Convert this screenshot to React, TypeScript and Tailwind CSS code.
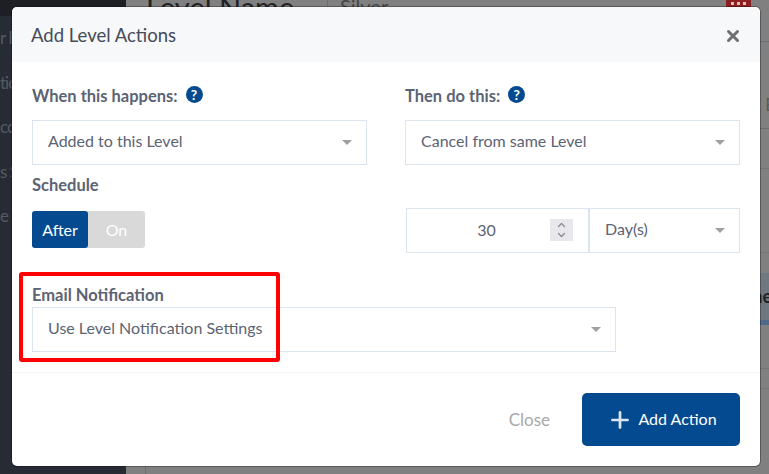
import React from 'react';
import { Plus, X, ChevronUp, ChevronDown } from 'lucide-react';

const Caret = () => <span className="h-0 w-0 border-x-[5px] border-t-[5px] border-x-transparent border-t-[#a0a0a0]" />;

const Help = () => (
  <span className="-mt-[3px] flex h-[17px] w-[17px] items-center justify-center rounded-full bg-[#044a90] text-[14px] font-bold leading-none text-white">?</span>
);

const Select = ({ value, className }: { value: string; className?: string }) => (
  <div className={`flex h-[45px] items-center justify-between border border-[#dce4ef] pl-[15px] pr-[14px] text-[16px] text-[#5c6373] ${className ?? ''}`}>
    <span className="-mt-[3px]">{value}</span>
    <Caret />
  </div>
);

const Label = ({ children, className }: { children: React.ReactNode; className?: string }) => (
  <div className={`flex h-[22px] items-center gap-[8px] text-[16.5px] font-bold text-[#5c6373] ${className ?? ''}`}>{children}</div>
);

const App: React.FC = () => {
  return (
    <div className='relative flex h-[474px] w-[769px] overflow-hidden bg-[#808080] font-["Lato","Noto_Sans",sans-serif]'>
      <aside className="flex w-[126px] flex-col bg-[#272b33]">
        <div className="h-4 bg-[#1d1f24]" />
        <div className="flex flex-col gap-[22.5px] pt-[11px] text-[17px] leading-[22px] tracking-[-1px] text-[#555a62]">
          <span>r F</span>
          <span>tic</span>
          <span>cc</span>
          <span>s S</span>
          <span>e</span>
        </div>
      </aside>

      <main className="flex flex-1 flex-col">
        <div className="flex h-[42px] border-b border-[#6e6e6e]">
          <div className="flex w-[202px] border-r border-[#6e6e6e] pl-5">
            <span className="-mt-[11px] text-[29px] leading-[36px] text-[#222]">Level Name</span>
          </div>
          <div className="flex flex-1 justify-between pl-3 pr-[18px]">
            <span className="-mt-2 text-[20px] leading-7 text-[#444]">Silver</span>
            <div className="flex h-[7px] w-[25px] justify-center gap-[3px] bg-[#8c1f1f] pt-[2px]">
              <i className="h-[3px] w-[3px] bg-white/70" />
              <i className="h-[3px] w-[3px] bg-white/70" />
              <i className="h-[3px] w-[3px] bg-white/70" />
            </div>
          </div>
        </div>
        <div className="flex h-[87px] items-center justify-end border-b border-[#6e6e6e] pt-[40px] text-[17px] text-[#5a5a5a]">
          <span className="-mr-[6px]">E</span>
        </div>
        <div className="h-[40px] border-b border-[#747474]" />
        <div className="h-[84px] border-b border-[#747474]" />
        <div className="h-[20px]" />
        <div className="flex h-[52px] items-center justify-end border-b-[5px] border-[#4e6a88] bg-[#6f7780] text-[18px] font-bold text-[#222]">
          <span className="-mr-[3px]">ne</span>
        </div>
        <div className="h-[44px] border-b border-[#747474]" />
        <div className="h-[20px] border-b border-[#747474]" />
        <div className="ml-[19px] flex-1 border-l border-[#6e6e6e]" />
      </main>

      <div className="absolute left-3 top-[7px] flex h-[459px] w-[748px] flex-col rounded-[5px] bg-white shadow-[0_0_0_1px_rgba(0,0,0,0.3)]">
        <header className="flex h-[55px] items-center justify-between rounded-t-[5px] bg-[#f7f8fa] pl-[19px] pr-[19px] pt-[3px]">
          <h2 className="text-[18.5px] text-[#454b59]">Add Level Actions</h2>
          <X size={18} strokeWidth={4} className="mr-[-1px] text-[#707070]" />
        </header>

        <div className="flex-1 px-5 pt-[23px]">
          <div className="grid grid-cols-[335px_335px] gap-x-[38px]">
            <div>
              <Label className="mb-[13px]">When this happens: <Help /></Label>
              <Select value="Added to this Level" />
            </div>
            <div>
              <Label className="mb-[13px]">Then do this: <Help /></Label>
              <Select value="Cancel from same Level" />
            </div>
          </div>

          <Label className="mt-[9px]">Schedule</Label>
          <div className="mt-[12px] flex items-start justify-between">
            <div className="mt-[3px] flex h-[37px] w-[113px] overflow-hidden rounded-[3px] bg-[#d9d9d9] text-[16px]">
              <span className="flex w-[56px] items-center justify-center rounded-r-[3px] bg-[#044a90] text-white">After</span>
              <span className="flex flex-1 items-center justify-center text-white">On</span>
            </div>
            <div className="flex w-[334px]">
              <div className="relative flex h-[45px] w-[183px] items-center justify-center border border-[#dce4ef] pb-px pr-[22px] text-[16px] text-[#5c6373]">
                30
                <span className="absolute right-[15px] top-[10px] flex h-[22px] w-[23px] flex-col items-center justify-center bg-[#e8e8ec] text-[#8a8a8a]">
                  <ChevronUp size={13} strokeWidth={2.5} className="-mb-px" />
                  <ChevronDown size={13} strokeWidth={2.5} className="-mt-px" />
                </span>
              </div>
              <Select value="Day(s)" className="flex-1" />
            </div>
          </div>

          <Label className="mt-[31px]">Email Notification</Label>
          <Select value="Use Level Notification Settings" className="mt-px w-[584px]" />
        </div>

        <footer className="flex h-[94px] items-center justify-end gap-8 border-t border-[#f3f4f6] pr-5">
          <span className="text-[17px] text-[#a8a8a8]">Close</span>
          <button className="flex h-[53px] w-[158px] items-center justify-center gap-[5px] rounded-[5px] bg-[#044a90] pb-[2px] pl-[2px] text-[16px] text-white">
            <Plus size={26} strokeWidth={2.5} className="mt-[2px] text-[#dbe6f2]" />
            Add Action
          </button>
        </footer>
      </div>

      <div className="absolute left-[19px] top-[272px] h-[90px] w-[261px] rounded-[3px] border-4 border-[#ff0000]" />
    </div>
  );
};

export default App;
